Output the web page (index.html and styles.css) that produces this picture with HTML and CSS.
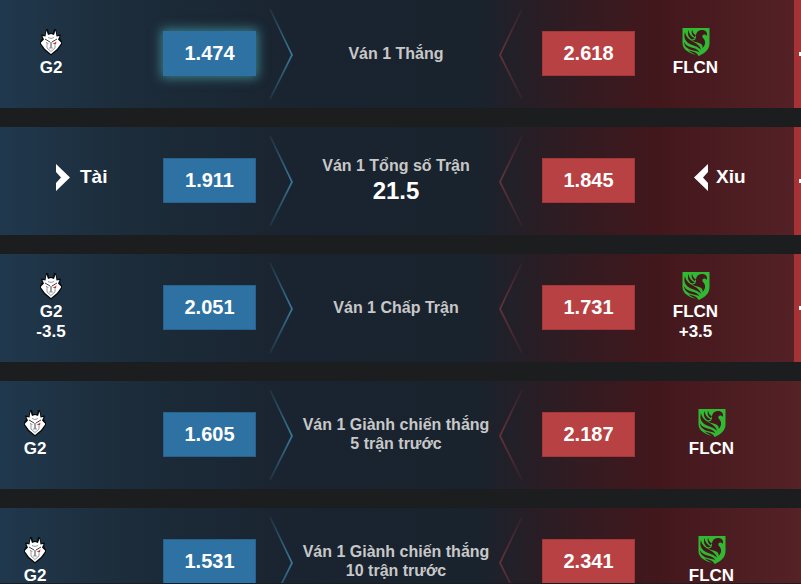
FILE: index.html
```html
<!DOCTYPE html>
<html lang="vi">
<head>
<meta charset="utf-8">
<meta name="viewport" content="width=device-width, initial-scale=1">
<title>G2 - FLCN</title>
<link rel="stylesheet" href="styles.css">
</head>
<body>
<svg class="sprite" aria-hidden="true">
  <symbol id="g2" viewBox="0 0 28 28">
    <path d="M9 1h2l1 4h4l1-4h2l1 6 4-.5-1 4 2 3v2.500l-4 6L14 27.500 7 22l-4-6v-2.500l2-3-1-4 4 .5z" fill="#080a0c"/>
    <path d="M9.500 2.500L11 7l3-1 3 1 1.500-4.500L19.500 8.500 22.500 8 21 11.500l3 3v1l-4 5.500L14 26 8 21l-4-5.500v-1l3-3L5.500 8l3 .5z" fill="#fff"/>
    <path d="M8 11l5 3M20 11l-5 3M14 14v6" fill="none" stroke="#3d4247" stroke-width="1"/>
    <path d="M10 16v4l4 3.500 4-3.500v-4M11 9.500l3 1 3-1M12 20h4" fill="none" stroke="#8d9297" stroke-width=".9"/>
    <path d="M9 14l3 1.500H9.500z" fill="#55595d"/>
    <path d="M15.500 16l4-2.500-.5 2.500z" fill="#d33127"/>
  </symbol>
  <symbol id="flcn" viewBox="0 0 28 28">
    <path d="M.5 0h27v15c0 7-5 10-10.500 13C7 25 .5 22 .5 15z" fill="#32b933"/>
    <g fill="#42181c">
      <path d="M10 12c3 1 4-1 4-4 0-4 3-6 6-6 3.500 0 5.500 2 5 6-1.500-2-3.500-2-4.500-.5-1 2 2 3 2.500 6 .5 3-1 5-2.500 6.500.5-3-1-4-3.500-5-3-1-6-1.500-7-3z"/>
      <path d="M3 4c-1.500 5 0 9 4 11.500 4 2.500 9 2.500 12 6.500-1-5-5-6.500-8-8.500C6 11 3.500 8 3 4z"/>
      <path d="M6.500 2C5 6 6.500 9.500 10 11.500l3-1C9 8.500 7 6 6.500 2z"/>
      <path d="M10 1.500C9 5 10 7 12.500 9l1.500-1.500C11.500 6 10.500 4 10 1.500z"/>
      <path d="M2 14c2 4.500 6 5 9.500 6 3 1 5 2 6 4.500-2-1.500-5-1.500-8-2.500C5 20.500 2 18 2 14z"/>
      <path d="M6 22c4 2 7 1 10.500 5.500L15 28c-3-3-6-3-9-6z"/>
    </g>
  </symbol>
  <symbol id="over" viewBox="0 0 14 27"><path d="M0 0l14 13.500L0 27v-8l5-5.500L0 8z" fill="#fff"/></symbol>
  <symbol id="under" viewBox="0 0 14 27"><path d="M14 0L0 13.500 14 27v-8l-5-5.500L14 8z" fill="#fff"/></symbol>
  <symbol id="edge-blue" viewBox="0 0 24 92">
    <linearGradient id="blue-fade" x1="0" y1="0" x2="0" y2="1">
      <stop offset="0" stop-color="#3f8fb5" stop-opacity=".12"/><stop offset=".5" stop-color="#3f8fb5" stop-opacity=".8"/><stop offset="1" stop-color="#3f8fb5" stop-opacity=".12"/>
    </linearGradient>
    <path d="M1 1l22 46L1 91" fill="none" stroke="url(#blue-fade)" stroke-width="1.700"/>
  </symbol>
  <symbol id="edge-red" viewBox="0 0 24 92">
    <linearGradient id="red-fade" x1="0" y1="0" x2="0" y2="1">
      <stop offset="0" stop-color="#843a40" stop-opacity=".12"/><stop offset=".5" stop-color="#843a40" stop-opacity=".7"/><stop offset="1" stop-color="#843a40" stop-opacity=".12"/>
    </linearGradient>
    <path d="M23 1L1 47l22 44" fill="none" stroke="url(#red-fade)" stroke-width="1.700"/>
  </symbol>
  <symbol id="plus" viewBox="0 0 14 14"><path d="M0 5h5V0h4v5h5v4H9v5H5V9H0z" fill="#fff"/></symbol>
</svg>

<main class="markets">
  <section class="market">
    <div class="team home"><svg class="logo"><use href="#g2"/></svg><span>G2</span></div>
    <button class="odds blue active" type="button">1.474</button>
    <svg class="edge"><use href="#edge-blue"/></svg>
    <h2 class="title">Ván 1 Thắng</h2>
    <svg class="edge"><use href="#edge-red"/></svg>
    <button class="odds red" type="button">2.618</button>
    <div class="team away"><svg class="logo"><use href="#flcn"/></svg><span>FLCN</span></div>
    <button class="more" type="button" aria-label="+"><svg><use href="#plus"/></svg></button>
  </section>

  <section class="market">
    <div class="side home"><svg class="arrow"><use href="#over"/></svg><span>Tài</span></div>
    <button class="odds blue" type="button">1.911</button>
    <svg class="edge"><use href="#edge-blue"/></svg>
    <h2 class="title">Ván 1 Tổng số Trận <strong class="line">21.5</strong></h2>
    <svg class="edge"><use href="#edge-red"/></svg>
    <button class="odds red" type="button">1.845</button>
    <div class="side away"><svg class="arrow"><use href="#under"/></svg><span>Xỉu</span></div>
    <button class="more" type="button" aria-label="+"><svg><use href="#plus"/></svg></button>
  </section>

  <section class="market">
    <div class="team home"><svg class="logo"><use href="#g2"/></svg><span>G2</span><span>-3.5</span></div>
    <button class="odds blue" type="button">2.051</button>
    <svg class="edge"><use href="#edge-blue"/></svg>
    <h2 class="title">Ván 1 Chấp Trận</h2>
    <svg class="edge"><use href="#edge-red"/></svg>
    <button class="odds red" type="button">1.731</button>
    <div class="team away"><svg class="logo"><use href="#flcn"/></svg><span>FLCN</span><span>+3.5</span></div>
    <button class="more" type="button" aria-label="+"><svg><use href="#plus"/></svg></button>
  </section>

  <section class="market wide">
    <div class="team home"><svg class="logo"><use href="#g2"/></svg><span>G2</span></div>
    <button class="odds blue" type="button">1.605</button>
    <svg class="edge"><use href="#edge-blue"/></svg>
    <h2 class="title">Ván 1 Giành chiến thắng<br>5 trận trước</h2>
    <svg class="edge"><use href="#edge-red"/></svg>
    <button class="odds red" type="button">2.187</button>
    <div class="team away"><svg class="logo"><use href="#flcn"/></svg><span>FLCN</span></div>
  </section>

  <section class="market wide">
    <div class="team home"><svg class="logo"><use href="#g2"/></svg><span>G2</span></div>
    <button class="odds blue" type="button">1.531</button>
    <svg class="edge"><use href="#edge-blue"/></svg>
    <h2 class="title">Ván 1 Giành chiến thắng<br>10 trận trước</h2>
    <svg class="edge"><use href="#edge-red"/></svg>
    <button class="odds red" type="button">2.341</button>
    <div class="team away"><svg class="logo"><use href="#flcn"/></svg><span>FLCN</span></div>
  </section>
</main>
</body>
</html>
```
FILE: styles.css
```css
* {
  box-sizing: border-box;
}

body {
  margin: 0;
  height: 100vh;
  overflow: hidden;
  background: #1b1d1e;
  color: #fff;
  font-family: "Liberation Sans", Arial, sans-serif;
  font-weight: 700;
}

.sprite {
  position: absolute;
  width: 0;
  height: 0;
}

.markets {
  display: flex;
  flex-direction: column;
  gap: 19px;
  max-height: 100vh;
  overflow: hidden;
  border-bottom: 1px solid #1b1d1e;
}

.market {
  display: grid;
  flex: none;
  grid-template-columns: minmax(0, 163fr) 93px 37px minmax(0, 206fr) 43px 93px minmax(0, 159fr) 7px;
  grid-template-rows: minmax(108px, auto);
  align-items: center;
  background: linear-gradient(90deg, #20384d 0%, #1c2c3a 16%, #1a2430 36%, #18232e 59%, #2b1d24 68%, #42171c 82%, #552226 100%);
}

.team {
  display: flex;
  flex-direction: column;
  align-items: center;
  padding-bottom: 2px;
  font-size: 17px;
  line-height: 20px;
}

.logo {
  width: 28px;
  height: 28px;
  margin-bottom: 2px;
}

.home {
  padding-right: 61px;
}

.away {
  padding-right: 38px;
}

.wide .home {
  padding-right: 93px;
}

.wide .away {
  grid-column: 7 / 9;
  padding-right: 13px;
}

.side {
  display: flex;
  align-items: center;
  gap: 10px;
  padding: 0 0 8px 56px;
  font-size: 19px;
  line-height: 24px;
}

.side.away {
  padding-left: 59px;
  padding-right: 0;
  gap: 8px;
}

.arrow {
  width: 14px;
  height: 27px;
}

.odds {
  height: 45px;
  margin-bottom: 2px;
  padding: 0;
  border: 1px solid;
  color: #fff;
  font: 700 20px/24px "Liberation Sans", Arial, sans-serif;
}

.blue {
  border-color: #28618b;
  background: #2e72a3;
}

.red {
  border-color: #a53739;
  background: #b84143;
}

.active {
  border-color: #2e72a3;
  box-shadow: 0 0 10px 2px #3a7f89;
}

.edge {
  width: 24px;
  height: 92px;
}

.blue + .edge {
  justify-self: end;
}

.title {
  padding-bottom: 2px;
  margin: 0;
  color: #c8c8c8;
  font-size: 16px;
  line-height: 19px;
  text-align: center;
}

.line {
  display: block;
  margin-bottom: -2px;
  color: #fff;
  font-size: 24px;
  line-height: 32px;
}

.more {
  display: flex;
  align-items: center;
  align-self: stretch;
  padding: 0 0 0 5px;
  overflow: hidden;
  border: 0;
  background: #a53234;
}

.more svg {
  flex: none;
  width: 14px;
  height: 14px;
}
```
